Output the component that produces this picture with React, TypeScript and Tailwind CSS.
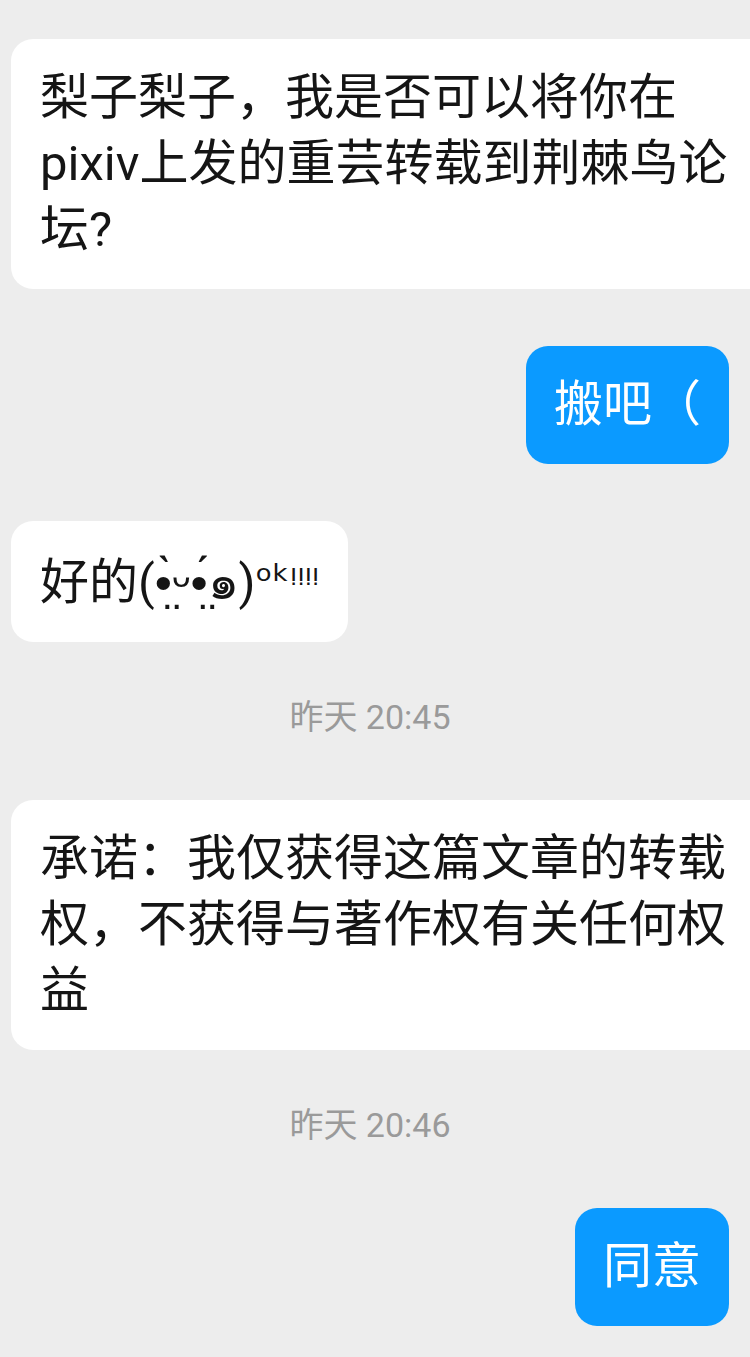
import type { ReactNode } from "react";

const font = { fontFamily: 'Roboto, "Noto Sans CJK SC", sans-serif' };

type Msg =
    | { kind: "left"; lines: ReactNode[]; wide?: boolean }
    | { kind: "right"; text: string }
    | { kind: "time"; text: string };

const kaomoji = (
    <>
        好的(•̤̀ᵕ•̤́๑)
        <span className="text-[41px] align-[5px]" style={{ fontFamily: '"DejaVu Sans", sans-serif' }}>
            ᵒᵏᵎᵎᵎᵎ
        </span>
    </>
);

const messages: Msg[] = [
    { kind: "left", wide: true, lines: ["梨子梨子，我是否可以将你在", "pixiv上发的重芸转载到荆棘鸟论", "坛?"] },
    { kind: "right", text: "搬吧（" },
    { kind: "left", lines: [kaomoji] },
    { kind: "time", text: "昨天 20:45" },
    { kind: "left", wide: true, lines: ["承诺：我仅获得这篇文章的转载", "权，不获得与著作权有关任何权", "益"] },
    { kind: "time", text: "昨天 20:46" },
    { kind: "right", text: "同意" },
];

export default function App() {
    return (
        <div className="w-full min-h-screen bg-[#ededed] overflow-hidden pt-[39px] pb-[30px] flex flex-col" style={font}>
            {messages.map((m, i) => {
                const prev = messages[i - 1];
                // spacing depends on what came before
                let mt = "";
                if (i > 0) mt = m.kind === "time" ? "mt-[55px]" : prev?.kind === "time" ? "mt-[63px]" : "mt-[57px]";

                if (m.kind === "time") {
                    return (
                        <div key={i} className={`${mt} h-[40px] flex items-center justify-center pr-[10px] text-[34px] text-[#9a9a9a]`}>
                            {m.text}
                        </div>
                    );
                }

                if (m.kind === "right") {
                    return (
                        <div key={i} className={`${mt} flex justify-end pr-[21px]`}>
                            <div className="bg-[#0b9aff] text-white rounded-[22px] px-[28px] py-[26px] text-[49px] leading-[66px] whitespace-nowrap">
                                {m.text}
                            </div>
                        </div>
                    );
                }

                return (
                    <div key={i} className={`${mt} flex justify-start pl-[11px]`}>
                        <div
                            className={`bg-white text-[#151515] rounded-[22px] pl-[29px] pr-[29px] py-[26px] text-[49px] leading-[66px] whitespace-nowrap ${
                                m.wide ? "w-[770px] shrink-0" : ""
                            }`}
                        >
                            {m.lines.map((line, j) => (
                                <div key={j}>{line}</div>
                            ))}
                        </div>
                    </div>
                );
            })}
        </div>
    );
}
